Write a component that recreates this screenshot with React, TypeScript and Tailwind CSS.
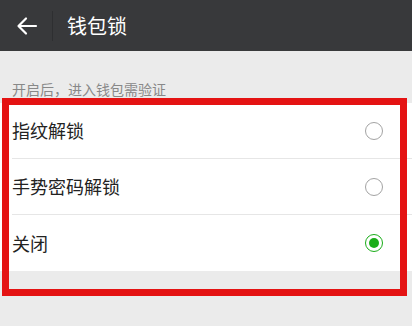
import React from "react";

const options = [
  { label: "指纹解锁", checked: false },
  { label: "手势密码解锁", checked: false },
  { label: "关闭", checked: true },
];

const Radio = ({ checked }: { checked: boolean }) =>
  checked ? (
    <div className="w-[18px] h-[18px] rounded-full border-[1.5px] border-[#1aad19] flex items-center justify-center">
      <div className="w-[10px] h-[10px] rounded-full bg-[#1aad19]"></div>
    </div>
  ) : (
    <div className="w-[18px] h-[18px] rounded-full border-[1.5px] border-[#a3a3a3]"></div>
  );

const App = () => {
  return (
    <div
      className="relative w-[412px] h-[326px] bg-[#ebebeb] overflow-hidden"
      style={{ fontFamily: '"Noto Sans CJK SC", "Noto Sans", sans-serif' }}
    >
      {/* header */}
      <div className="h-[51px] bg-[#38393b] flex items-center">
        <div className="w-[52px] flex justify-center pl-[2px]">
          <svg width="22" height="20" viewBox="0 0 22 20" fill="none">
            <path
              d="M20 10H3M10 2.5 2.5 10l7.5 7.5"
              stroke="#fff"
              strokeWidth="2.2"
              strokeLinecap="round"
              strokeLinejoin="round"
            />
          </svg>
        </div>
        <div className="w-px h-[30px] bg-[#2e2f31]"></div>
        <span className="ml-[14px] text-[20px] text-white leading-none">钱包锁</span>
      </div>

      {/* hint */}
      <div className="pl-[12px] pt-[28px] pb-[4px] text-[14px] leading-[20px] text-[#888]">
        开启后，进入钱包需验证
      </div>

      {/* options */}
      <div className="bg-white">
        {options.map((o, i) => (
          <div key={o.label} className="pl-[12px]">
            <div
              className={
                "h-[56px] flex items-center justify-between pr-[29px] " +
                (i < options.length - 1 ? "border-b border-[#e6e6e6]" : "")
              }
            >
              <span className="text-[18px] text-[#222]">{o.label}</span>
              <Radio checked={o.checked} />
            </div>
          </div>
        ))}
      </div>

      {/* red annotation */}
      <div className="absolute left-[2px] top-[98px] w-[405px] h-[198px] border-[7px] border-[#e41313] pointer-events-none"></div>
    </div>
  );
};

export default App;
